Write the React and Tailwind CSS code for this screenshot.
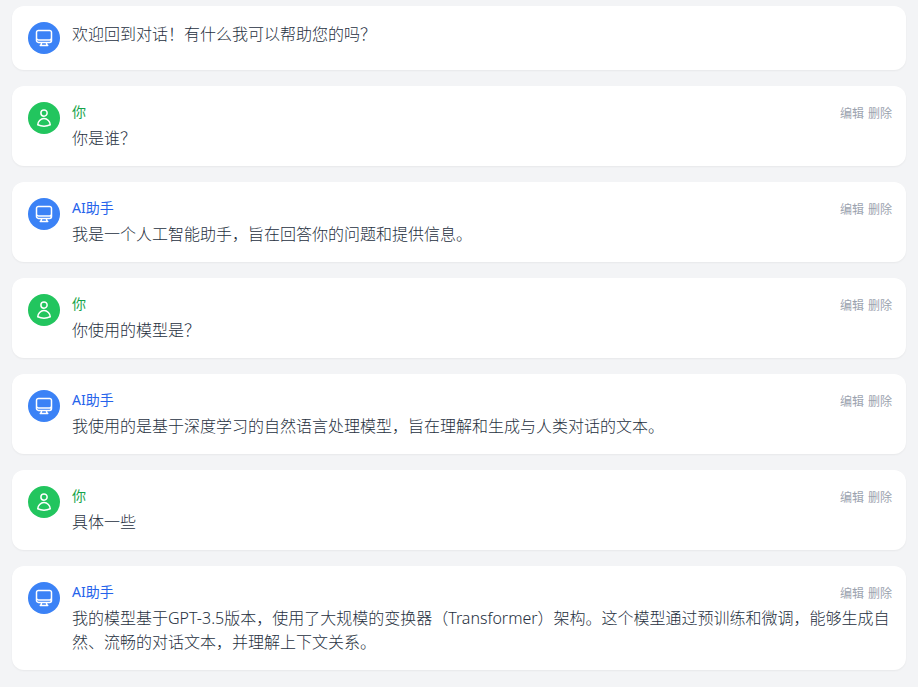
const messages = [
  { role: "ai", text: "欢迎回到对话！有什么我可以帮助您的吗？", welcome: true },
  { role: "user", text: "你是谁？" },
  { role: "ai", text: "我是一个人工智能助手，旨在回答你的问题和提供信息。" },
  { role: "user", text: "你使用的模型是？" },
  { role: "ai", text: "我使用的是基于深度学习的自然语言处理模型，旨在理解和生成与人类对话的文本。" },
  { role: "user", text: "具体一些" },
  { role: "ai", text: "我的模型基于GPT-3.5版本，使用了大规模的变换器（Transformer）架构。这个模型通过预训练和微调，能够生成自然、流畅的对话文本，并理解上下文关系。" },
];

const AiIcon = () => (
  <svg width="20" height="20" viewBox="0 0 24 24" fill="none" stroke="white" strokeWidth="1.8" strokeLinecap="round" strokeLinejoin="round">
    <path d="M9 17.25v1.007a3 3 0 01-.879 2.122L7.5 21h9l-.621-.621A3 3 0 0115 18.257V17.25m6-12V15a2.25 2.25 0 01-2.25 2.25H5.25A2.25 2.25 0 013 15V5.25m18 0A2.25 2.25 0 0018.75 3H5.25A2.25 2.25 0 003 5.25m18 0V12a2.25 2.25 0 01-2.25 2.25H5.25A2.25 2.25 0 013 12V5.25" />
  </svg>
);

const UserIcon = () => (
  <svg width="20" height="20" viewBox="0 0 24 24" fill="none" stroke="white" strokeWidth="1.8" strokeLinecap="round" strokeLinejoin="round">
    <path d="M15.75 6a3.75 3.75 0 11-7.5 0 3.75 3.75 0 017.5 0zM4.501 20.118a7.5 7.5 0 0114.998 0A17.933 17.933 0 0112 21.75c-2.676 0-5.216-.584-7.499-1.632z" />
  </svg>
);

const Message = ({ role, text, welcome }) => {
  const isAi = role === "ai";
  return (
    <div className="flex gap-3 rounded-xl bg-white p-4 shadow-xs">
      <div className={`flex h-8 w-8 shrink-0 items-center justify-center rounded-full ${isAi ? "bg-[#3b82f6]" : "bg-[#22c55e]"}`}>
        {isAi ? <AiIcon /> : <UserIcon />}
      </div>
      <div className="min-w-0 flex-1">
        {!welcome && (
          <div className="mb-1 flex items-start justify-between">
            <span className={`text-sm leading-5 ${isAi ? "text-[#2563eb]" : "text-[#16a34a]"}`}>
              {isAi ? "AI助手" : "你"}
            </span>
            <span className="-mr-0.5 mt-1 flex gap-1 text-xs leading-4 text-[#9ca3af]">
              <span>编辑</span>
              <span>删除</span>
            </span>
          </div>
        )}
        <p className="text-base font-light leading-6 text-[#263040]">{text}</p>
      </div>
    </div>
  );
};

export default function App() {
  return (
    <div className="flex min-h-screen flex-col gap-4 bg-[#f3f4f6] px-3 pt-1.5 font-['Noto_Sans','Noto_Sans_CJK_SC',sans-serif]">
      {messages.map((m, i) => (
        <Message key={i} {...m} />
      ))}
    </div>
  );
}
